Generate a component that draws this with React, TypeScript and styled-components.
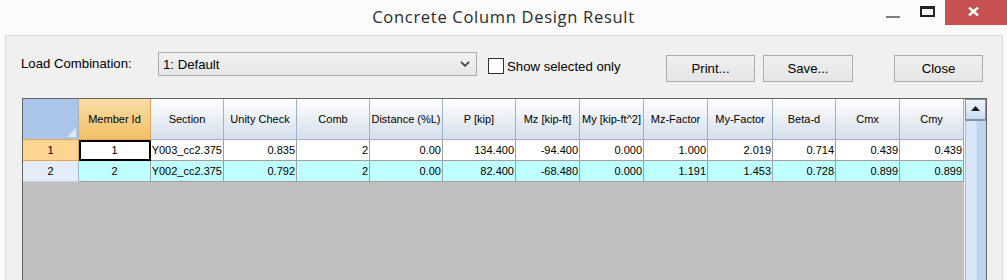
import React from "react";
import styled, { createGlobalStyle } from "styled-components";

const GlobalStyle = createGlobalStyle`
  html, body {
    margin: 0;
    padding: 0;
    background: #fbfbfb;
    overflow: hidden;
  }
  body {
    font-family: "Liberation Sans", Arial, sans-serif;
  }
  * {
    box-sizing: border-box;
  }
`;

type Row = {
  id: string;
  section: string;
  unity: string;
  comb: string;
  dist: string;
  p: string;
  mz: string;
  my: string;
  mzf: string;
  myf: string;
  beta: string;
  cmx: string;
  cmy: string;
};

const columns = [
  "Member Id",
  "Section",
  "Unity Check",
  "Comb",
  "Distance (%L)",
  "P [kip]",
  "Mz [kip-ft]",
  "My [kip-ft^2]",
  "Mz-Factor",
  "My-Factor",
  "Beta-d",
  "Cmx",
  "Cmy",
];

const rows: Row[] = [
  {
    id: "1",
    section: "Y003_cc2.375",
    unity: "0.835",
    comb: "2",
    dist: "0.00",
    p: "134.400",
    mz: "-94.400",
    my: "0.000",
    mzf: "1.000",
    myf: "2.019",
    beta: "0.714",
    cmx: "0.439",
    cmy: "0.439",
  },
  {
    id: "2",
    section: "Y002_cc2.375",
    unity: "0.792",
    comb: "2",
    dist: "0.00",
    p: "82.400",
    mz: "-68.480",
    my: "0.000",
    mzf: "1.191",
    myf: "1.453",
    beta: "0.728",
    cmx: "0.899",
    cmy: "0.899",
  },
];

export default function App() {
  return (
    <>
      <GlobalStyle />
      <Window>
        <TitleBar>
          <span />
          <Title>Concrete Column Design Result</Title>
          <WindowControls>
            <MinimizeIcon />
            <MaximizeIcon />
            <CloseButton>
              <svg width="11" height="9" viewBox="0 0 11 9">
                <path d="M1 0.5 L10 8.5 M10 0.5 L1 8.5" stroke="#fff" strokeWidth="2.4" />
              </svg>
            </CloseButton>
          </WindowControls>
        </TitleBar>

        <Panel>
          <ControlsRow>
            <FieldLabel>Load Combination:</FieldLabel>
            <ComboBox>
              <span>1: Default</span>
              <svg width="10" height="6" viewBox="0 0 10 6">
                <path d="M1 0.8 L5 4.8 L9 0.8" fill="none" stroke="#444" strokeWidth="1.8" />
              </svg>
            </ComboBox>
            <CheckGroup>
              <CheckBox />
              <span>Show selected only</span>
            </CheckGroup>
            <Button>Print...</Button>
            <Button $gap={8} $width={90}>Save...</Button>
            <Button $gap={41}>Close</Button>
          </ControlsRow>

          <GridFrame>
            <DataArea>
              <Table>
                <HeaderCell $variant="corner">
                  <svg width="9" height="9" viewBox="0 0 9 9">
                    <polygon points="9,0 9,9 0,9" fill="#dfe8f5" />
                  </svg>
                </HeaderCell>
                {columns.map((c, i) => (
                  <HeaderCell key={c} $variant={i === 0 ? "active" : "normal"}>
                    {c}
                  </HeaderCell>
                ))}

                {rows.map((r, ri) => {
                  const cyan = ri === 1;
                  const values = [
                    r.section,
                    r.unity,
                    r.comb,
                    r.dist,
                    r.p,
                    r.mz,
                    r.my,
                    r.mzf,
                    r.myf,
                    r.beta,
                    r.cmx,
                    r.cmy,
                  ];
                  return (
                    <React.Fragment key={r.id}>
                      <RowHeader $active={ri === 0}>{r.id}</RowHeader>
                      <Cell $center $cyan={cyan} $selected={ri === 0}>
                        {r.id}
                      </Cell>
                      {values.map((v, vi) => (
                        <Cell key={vi} $cyan={cyan}>
                          <span>{v}</span>
                        </Cell>
                      ))}
                    </React.Fragment>
                  );
                })}
              </Table>
            </DataArea>
            <ScrollBar>
              <ScrollButton>
                <svg width="9" height="5" viewBox="0 0 9 5">
                  <polygon points="4.5,0 9,5 0,5" fill="#1a1a1a" />
                </svg>
              </ScrollButton>
              <ScrollTrack />
            </ScrollBar>
          </GridFrame>
        </Panel>
      </Window>
    </>
  );
}

const Window = styled.div`
  width: 1007px;
  height: 280px;
  display: flex;
  flex-direction: column;
  background: #fbfbfb;
  overflow: hidden;
`;

const TitleBar = styled.div`
  height: 35px;
  flex: none;
  display: grid;
  grid-template-columns: 1fr auto 1fr;
`;

const Title = styled.div`
  padding-top: 5px;
  font-family: "Open Sans", "Noto Sans", sans-serif;
  font-size: 16.5px;
  letter-spacing: 0.7px;
  color: #2b2b2b;
  white-space: nowrap;
`;

const WindowControls = styled.div`
  display: flex;
  justify-content: flex-end;
  align-items: flex-start;
`;

const MinimizeIcon = styled.div`
  width: 14px;
  height: 2px;
  margin-top: 16px;
  background: #7d7d7d;
`;

const MaximizeIcon = styled.div`
  width: 15px;
  height: 11px;
  margin-top: 6px;
  margin-left: 20px;
  border: 2px solid #222;
  border-top-width: 3px;
`;

const CloseButton = styled.div`
  width: 62px;
  height: 25px;
  margin-left: 10px;
  background: #c75050;
  display: flex;
  align-items: center;
  justify-content: center;
  padding: 0 5px 2px 0;
`;

const Panel = styled.div`
  flex: 1;
  margin: 0 4px 0 5px;
  border: 1px solid #d9d9d9;
  border-bottom: none;
  background: #f0f0f0;
  padding: 16px 0 0 16px;
  display: flex;
  flex-direction: column;
`;

const ControlsRow = styled.div`
  display: flex;
  align-items: flex-start;
  font-size: 13.2px;
  color: #000;
`;

const FieldLabel = styled.div`
  flex: none;
  width: 137px;
  margin-left: -1px;
  height: 24px;
  line-height: 24px;
`;

const ComboBox = styled.div`
  flex: none;
  width: 319px;
  height: 24px;
  border: 1px solid #acacac;
  background: linear-gradient(#f2f2f2, #e6e6e6);
  display: flex;
  align-items: center;
  justify-content: space-between;
  padding: 0 6px 0 4px;
`;

const CheckGroup = styled.div`
  flex: none;
  width: 178px;
  margin-left: 11px;
  height: 30px;
  display: flex;
  align-items: center;
  gap: 3px;
  padding-bottom: 2px;
`;

const CheckBox = styled.div`
  width: 16px;
  height: 16px;
  border: 1px solid #333;
  background: #fff;
`;

const Button = styled.div<{ $gap?: number; $width?: number }>`
  flex: none;
  width: ${(p) => p.$width ?? 89}px;
  height: 27px;
  margin-top: 3px;
  margin-left: ${(p) => p.$gap ?? 0}px;
  border: 1px solid #adadad;
  background: linear-gradient(#f0f0f0, #e5e5e5);
  display: flex;
  align-items: center;
  justify-content: center;
`;

const GridFrame = styled.div`
  margin-top: 16px;
  width: 965px;
  flex: 1;
  border: 1px solid #646464;
  border-bottom: none;
  display: flex;
`;

const DataArea = styled.div`
  width: 941px;
  flex: none;
  background: #c0c0c0;
`;

const Table = styled.div`
  display: grid;
  grid-template-columns: 56px 72px 73px 73px 73px 73px 73px 64px 64px 64px 65px 63px 64px 64px;
  grid-template-rows: 41px 21px 21px;
  font-size: 11px;
  color: #000;
`;

const headerBg = {
  corner: "#abc6ea",
  active: "linear-gradient(#fadda8, #f1c064)",
  normal: "linear-gradient(#ffffff, #d5deeb)",
};

const HeaderCell = styled.div<{ $variant: "corner" | "active" | "normal" }>`
  background: ${(p) => headerBg[p.$variant]};
  border-right: 1px solid ${(p) => (p.$variant === "active" ? "#e2a654" : "#9db3cb")};
  border-bottom: 1px solid ${(p) => (p.$variant === "normal" ? "#9db3cb" : "#e2a654")};
  display: flex;
  align-items: ${(p) => (p.$variant === "corner" ? "flex-end" : "center")};
  justify-content: ${(p) => (p.$variant === "corner" ? "flex-end" : "center")};
  padding: ${(p) => (p.$variant === "corner" ? "0 2px 2px 0" : "0 1px 1px")};
  white-space: nowrap;
  overflow: hidden;
`;

const RowHeader = styled.div<{ $active: boolean }>`
  background: ${(p) => (p.$active ? "#fed590" : "#e4ecf7")};
  border-right: 1px solid ${(p) => (p.$active ? "#e2a654" : "#9db3cb")};
  border-bottom: 1px solid ${(p) => (p.$active ? "#e2a654" : "#c7d3e3")};
  display: flex;
  align-items: center;
  justify-content: center;
`;

const Cell = styled.div<{ $cyan?: boolean; $center?: boolean; $selected?: boolean }>`
  background: ${(p) => (p.$cyan ? "#c0ffff" : "#ffffff")};
  border-right: 1px solid #a0a0a0;
  border-bottom: 1px solid #a0a0a0;
  display: flex;
  align-items: center;
  justify-content: ${(p) => (p.$center ? "center" : "flex-end")};
  padding-right: ${(p) => (p.$center ? 0 : 1)}px;
  white-space: nowrap;
  overflow: hidden;
  outline: ${(p) => (p.$selected ? "2px solid #000" : "none")};
  outline-offset: -2px;

  & > span {
    flex: none;
  }
`;

const ScrollBar = styled.div`
  flex: 1;
  display: flex;
  flex-direction: column;
  padding-left: 1px;
  background: #f0f0f0;
`;

const ScrollButton = styled.div`
  height: 21px;
  flex: none;
  border: 1px solid #7f93af;
  background: linear-gradient(#eef4fc, #cddcf1);
  display: flex;
  align-items: center;
  justify-content: center;
  padding-bottom: 3px;
`;

const ScrollTrack = styled.div`
  flex: 1;
  border-left: 1px solid #a9bcd7;
  border-top: 1px solid #7f93af;
  background: linear-gradient(90deg, #d9e6f7 0%, #d9e6f7 50%, #c0d4f0 55%, #c0d4f0 100%);
`;
